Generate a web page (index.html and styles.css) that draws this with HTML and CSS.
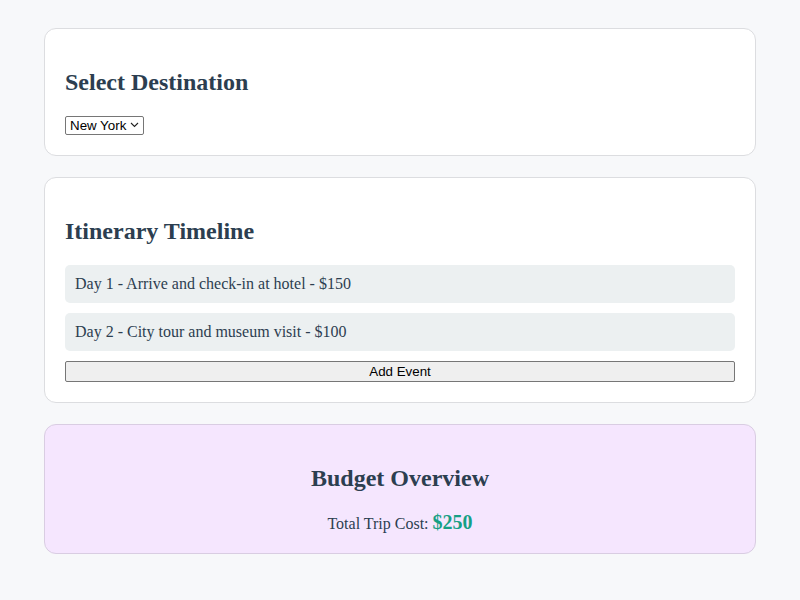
FILE: index.html
```html
<!DOCTYPE html>
<html>
<head>
<meta charset="utf-8">
<link rel="stylesheet" href="styles.css">
</head>
<body>
<div class="app">
  <section class="card">
    <h2 class="title">Select Destination</h2>
    <select class="dest">
      <option>New York</option>
      <option>Paris</option>
      <option>Tokyo</option>
    </select>
  </section>
  <section class="card">
    <h2 class="title">Itinerary Timeline</h2>
    <div class="timeline">
      <div class="event">Day 1 - Arrive and check-in at hotel - $150</div>
      <div class="event">Day 2 - City tour and museum visit - $100</div>
      <button class="add-btn">Add Event</button>
    </div>
  </section>
  <section class="card budget">
    <h2 class="title">Budget Overview</h2>
    <div class="total">Total Trip Cost: <span class="amount">$250</span></div>
  </section>
</div>
</body>
</html>
```
FILE: styles.css
```css
html, body {
  margin: 0;
  padding: 0;
  background: #f7f8fa;
}
body {
  font-family: "Liberation Serif", "Times New Roman", serif;
  color: #2c3e50;
}
.app {
  padding: 28px 44px;
  display: flex;
  flex-direction: column;
  gap: 21px;
}
.card {
  background: #ffffff;
  border: 1px solid #dcdde0;
  border-radius: 12px;
  padding: 20px;
}
.title {
  font-size: 24px;
  line-height: 27px;
  font-weight: bold;
  margin: 19.92px 0;
  color: #2c3e50;
}
.dest {
  font-family: "Liberation Sans", Arial, sans-serif;
  font-size: 13.33px;
  height: 19px;
  width: 79px;
  padding: 0 14px 0 4px;
  color: #000;
  border: 1px solid #767676;
  border-radius: 2px;
  appearance: none;
  -webkit-appearance: none;
  background-color: #fff;
  background-image: url("data:image/svg+xml;utf8,<svg xmlns='http://www.w3.org/2000/svg' width='9' height='6' viewBox='0 0 9 6'><path d='M1 1l3.5 3.5L8 1' fill='none' stroke='%23222' stroke-width='1.1'/></svg>");
  background-repeat: no-repeat;
  background-position: right 4px center;
}
.timeline {
  display: flex;
  flex-direction: column;
  gap: 10px;
}
.event {
  background: #ecf0f1;
  border-radius: 5px;
  padding: 10px;
  font-size: 16px;
  line-height: 18.4px;
}
.add-btn {
  font-family: "Liberation Sans", Arial, sans-serif;
  font-size: 13.33px;
  width: 100%;
  height: 21px;
  background: #efefef;
  color: #000;
  border: 1px solid #767676;
  border-radius: 2px;
  padding: 1px 6px;
}
.budget {
  background: #f5e6fe;
  border-color: #d9cde2;
  text-align: center;
}
.total {
  font-size: 16px;
  line-height: 19px;
}
.amount {
  font-size: 20px;
  line-height: 1;
  font-weight: bold;
  color: #16a085;
}
```
